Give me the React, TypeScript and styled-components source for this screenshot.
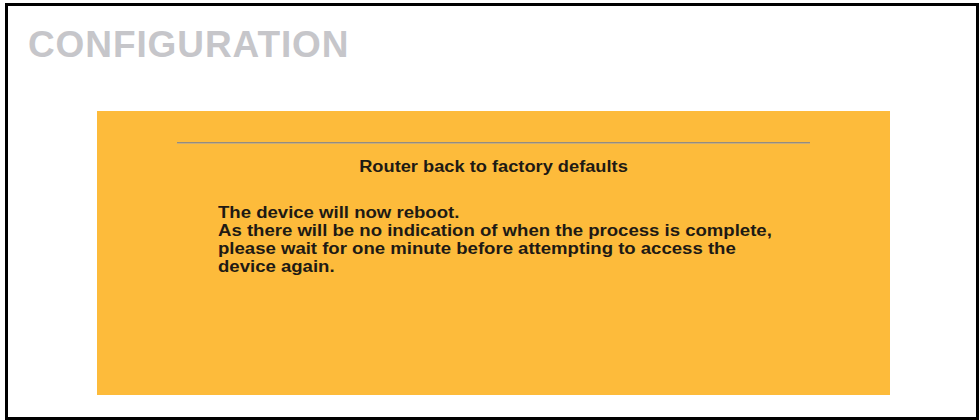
import React from "react";
import styled, { createGlobalStyle } from "styled-components";

const Global = createGlobalStyle`
  html, body { margin: 0; padding: 0; background: #ffffff; }
  body { font-family: "Liberation Sans", Arial, sans-serif; }
`;

const Frame = styled.div`
  box-sizing: border-box;
  margin: 3px 0 0 5px;
  width: 974px;
  height: 417px;
  border: 3px solid #000000;
  background: #ffffff;
  padding: 20px 0 0 0;
  display: flex;
  flex-direction: column;
`;

const Title = styled.h1`
  margin: 0 0 0 20px;
  font-family: "Liberation Sans", Arial, sans-serif;
  font-weight: bold;
  font-size: 37px;
  line-height: 37px;
  color: #c6c6ca;
  letter-spacing: 0.9px;
`;

const Panel = styled.div`
  box-sizing: border-box;
  margin: 48px 0 0 89px;
  width: 793px;
  height: 284px;
  background: #fdbb3b;
  padding-top: 31px;
  display: flex;
  flex-direction: column;
`;

const Rule = styled.div`
  margin: 0 80px;
  height: 0;
  border-top: 1px solid #948c80;
  border-bottom: 1px solid #c9ad78;
`;

const Heading = styled.div`
  margin-top: 14px;
  text-align: center;
  font-weight: bold;
  font-size: 16px;
  line-height: 18px;
  color: #1e1a14;
  transform: scaleX(1.14);
  transform-origin: 50% 0;
`;

const Message = styled.p`
  margin: 28px 0 0 121px;
  font-weight: bold;
  font-size: 16px;
  line-height: 18px;
  color: #1e1a14;
  transform: scaleX(1.16);
  transform-origin: 0 0;
`;

export default function App() {
  return (
    <>
      <Global />
      <Frame>
        <Title>CONFIGURATION</Title>
        <Panel>
          <Rule />
          <Heading>Router back to factory defaults</Heading>
          <Message>
            The device will now reboot.
            <br />
            As there will be no indication of when the process is complete,
            <br />
            please wait for one minute before attempting to access the
            <br />
            device again.
          </Message>
        </Panel>
      </Frame>
    </>
  );
}
